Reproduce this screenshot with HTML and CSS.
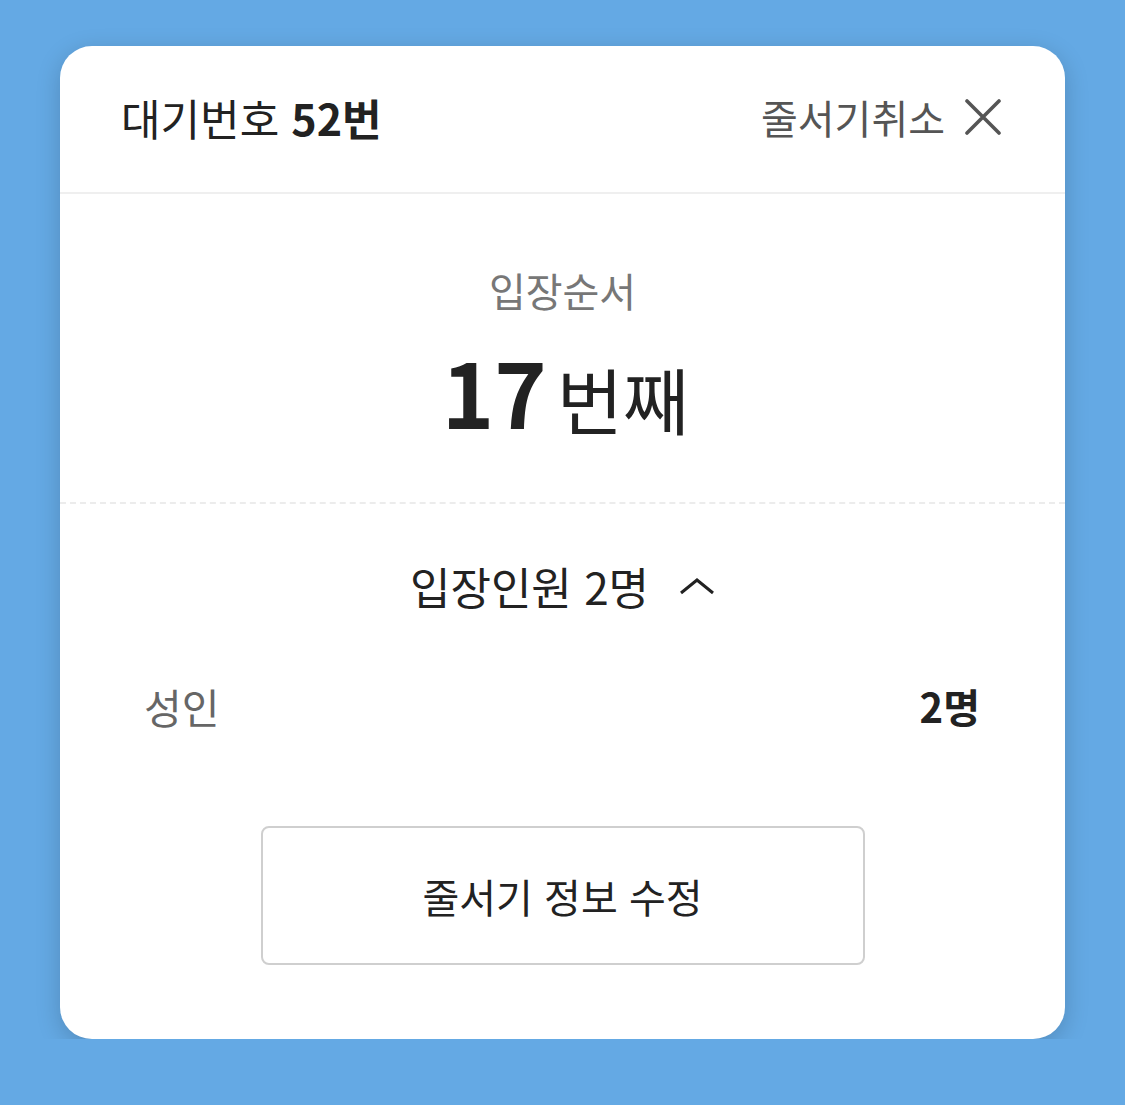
FILE: index.html
```html
<!DOCTYPE html>
<html lang="ko">
<head>
    <meta charset="UTF-8">
    <meta name="viewport" content="width=device-width, initial-scale=1.0">
    <title>줄서기 정보</title>
    <link rel="stylesheet" href="styles.css">
</head>
<body>
    <div class="card">
        <!-- Header -->
        <div class="card-header">
            <h1 class="wait-no">대기번호 <b>52번</b></h1>
            <button class="cancel-btn">
                줄서기취소
                <svg class="close-icon" width="36" height="36" viewBox="0 0 36 36">
                    <path d="M2 2 L34 34 M34 2 L2 34" stroke="#555" stroke-width="3.6" stroke-linecap="round" fill="none"/>
                </svg>
            </button>
        </div>

        <!-- Order -->
        <div class="order-box">
            <div class="order-label">입장순서</div>
            <div class="order-value"><span class="order-num">17</span><span class="order-unit">번째</span></div>
        </div>

        <!-- People -->
        <div class="people-box">
            <div class="people-title">
                입장인원 2명
                <svg class="chevron" width="36" height="18" viewBox="0 0 36 18">
                    <path d="M2 16 L18 3 L34 16" stroke="#222" stroke-width="3" fill="none"/>
                </svg>
            </div>
            <div class="people-row">
                <span class="people-type">성인</span>
                <span class="people-count">2명</span>
            </div>
            <button class="edit-btn">줄서기 정보 수정</button>
        </div>
    </div>
</body>
</html>
```

FILE: styles.css
```css
/* General */
body {
    margin: 0;
    background-color: #64a9e4;
    font-family: "Noto Sans CJK KR", "Noto Sans", sans-serif;
    color: #222;
}

/* Card */
.card {
    width: 1005px;
    margin: 46px 0 0 60px;
    background: white;
    border-radius: 32px;
    box-shadow: 0 6px 24px rgba(0, 0, 0, 0.18);
    padding-bottom: 74px;
}

/* Header */
.card-header {
    display: flex;
    justify-content: space-between;
    align-items: center;
    height: 142px;
    padding: 0 64px 4px 61px;
    border-bottom: 2px solid #efefef;
}

.wait-no {
    margin: 0;
    font-size: 43px;
    font-weight: 400;
}

.wait-no b {
    font-weight: 700;
}

.cancel-btn {
    display: flex;
    align-items: center;
    gap: 20px;
    border: none;
    background: none;
    padding: 0;
    font-family: inherit;
    font-size: 40px;
    color: #555;
}

/* Order */
.order-box {
    text-align: center;
    padding: 71px 0 61px;
    border-bottom: 2px dashed #ececec;
}

.order-label {
    font-size: 40px;
    line-height: 50px;
    color: #777;
}

.order-value {
    margin-top: 26px;
    line-height: 100px;
    height: 100px;
    padding-left: 6px;
}

.order-num {
    font-size: 89px;
    font-weight: 700;
    margin-right: 10px;
}

.order-unit {
    font-size: 72px;
}

/* People */
.people-box {
    padding-top: 54px;
}

.people-title {
    display: flex;
    justify-content: center;
    align-items: center;
    gap: 30px;
    font-size: 44px;
    line-height: 56px;
}

.people-row {
    display: flex;
    justify-content: space-between;
    align-items: center;
    margin-top: 65px;
    padding: 0 85px 0 84px;
    font-size: 41px;
    line-height: 54px;
}

.people-type {
    color: #666;
}

.people-count {
    font-size: 40px;
    font-weight: 700;
}

/* Button */
.edit-btn {
    display: block;
    width: 604px;
    height: 139px;
    margin: 93px auto 0;
    background: white;
    border: 2px solid #cfcfcf;
    border-radius: 8px;
    font-family: inherit;
    font-size: 40px;
    color: #222;
}
```
